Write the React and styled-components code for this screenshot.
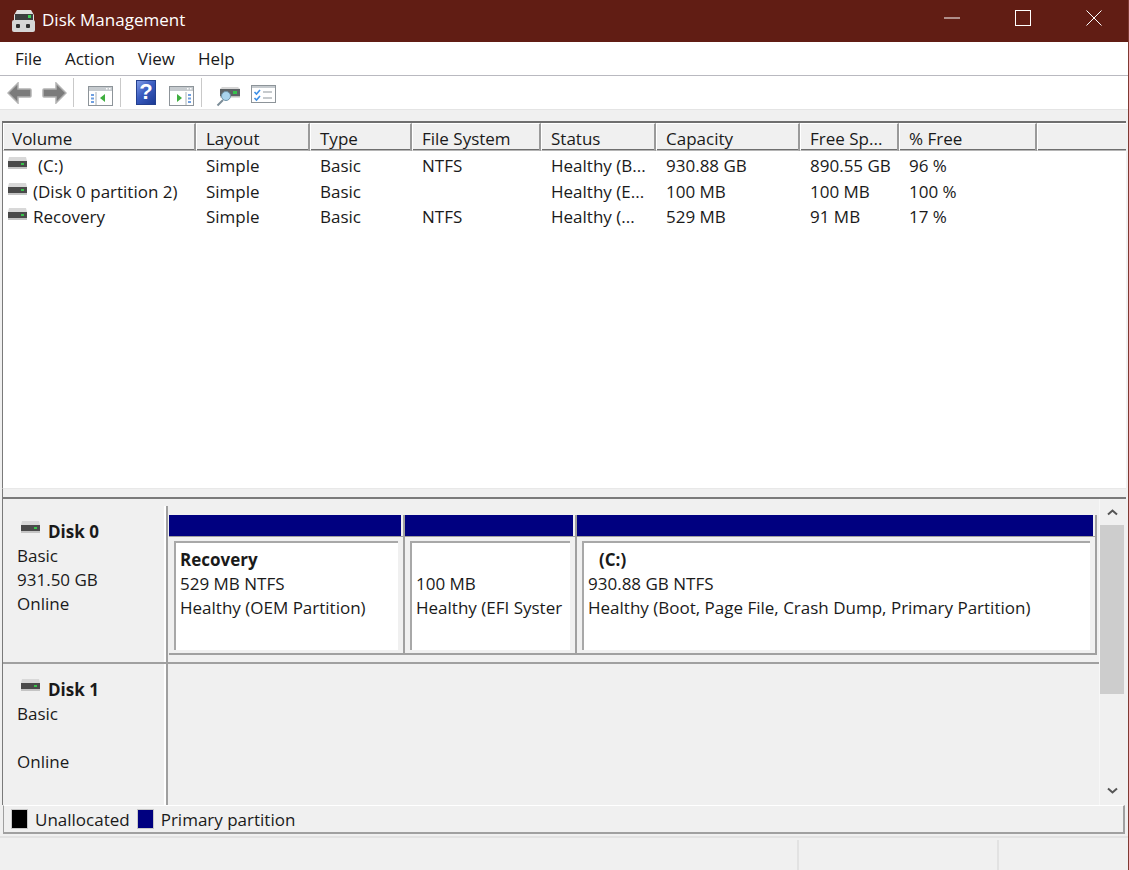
import React from "react";
import styled, { createGlobalStyle } from "styled-components";

const GlobalStyle = createGlobalStyle`
  html, body { margin: 0; padding: 0; background: #f0f0f0; }
  * { box-sizing: border-box; }
`;

const Window = styled.div`
  width: 1129px;
  height: 870px;
  display: flex;
  flex-direction: column;
  overflow: hidden;
  background: #f0f0f0;
  border-right: 1px solid #7f3a33;
  font-family: "Open Sans", "Liberation Sans", sans-serif;
  font-size: 17px;
  color: #1a1a1a;
`;

const TitleBar = styled.div`
  height: 42px;
  margin-right: -1px;
  flex: none;
  display: flex;
  align-items: center;
  background: #611d14;
  color: #fff;
  padding-left: 11px;
`;
const TitleText = styled.div`
  margin-left: 6px;
  line-height: 24px;
  margin-top: -3px;
`;
const WindowButtons = styled.div`
  margin-left: auto;
  align-self: flex-start;
  display: flex;
`;
const WindowButton = styled.div`
  width: 71px;
  height: 36px;
  display: flex;
  align-items: center;
  justify-content: center;
`;

const MenuBar = styled.div`
  height: 34px;
  flex: none;
  display: flex;
  align-items: center;
  gap: 23px;
  padding-left: 15px;
  background: #fff;
  border-bottom: 1px solid #b9b9c0;
`;
const MenuItem = styled.div`
  line-height: 22px;
`;

const ToolBar = styled.div`
  height: 34px;
  flex: none;
  display: flex;
  align-items: center;
  background: #fff;
  padding-left: 7px;
  border-bottom: 1px solid #e4e4e4;
`;
const ToolIcon = styled.div`
  flex: none;
  display: flex;
  margin-left: ${(p) => p.$gap || 0}px;
  margin-top: ${(p) => p.$drop || 0}px;
`;
const ToolSep = styled.div`
  flex: none;
  width: 1px;
  height: 29px;
  background: #c9c9c9;
  margin-left: ${(p) => p.$gap || 0}px;
`;
const HelpIcon = styled.div`
  flex: none;
  width: 20px;
  height: 25px;
  margin-left: 15px;
  margin-top: -1px;
  display: flex;
  align-items: center;
  justify-content: center;
  background: linear-gradient(135deg, #7f9be6 0%, #3a5cc0 45%, #1c3a95 100%);
  border: 1px solid #24408f;
  color: #fff;
  font-family: "Liberation Sans", sans-serif;
  font-weight: 700;
  font-size: 22px;
`;

const Strip = styled.div`
  height: 11px;
  flex: none;
`;

const ListPanel = styled.div`
  height: 367px;
  flex: none;
  margin: 0 2px;
  background: #fff;
  border-top: 2px solid #6f6f6f;
  border-left: 1px solid #7a7a7a;
  display: flex;
  flex-direction: column;
`;
const columns = "193px 114px 102px 129px 115px 144px 99px 138px 1fr";
const HeaderRow = styled.div`
  height: 28px;
  flex: none;
  display: grid;
  grid-template-columns: ${columns};
  background: #f0f0f0;
  border-bottom: 2px solid #6f6f6f;
`;
const HeaderCell = styled.div`
  padding: 4px 0 0 9px;
  line-height: 22px;
  white-space: nowrap;
  border-top: 1px solid #fff;
  border-left: 1px solid #fff;
  border-bottom: 1px solid #b5b5b5;
  border-right: 2px solid #9a9a9a;
  &:first-child { padding-left: 8px; }
  &:last-child { border-right: 0; }
`;
const ListRow = styled.div`
  display: grid;
  grid-template-columns: ${columns};
  height: 25.5px;
  line-height: 25px;
  white-space: nowrap;
  &:nth-child(2) { margin-top: 2px; }
`;
const ListCell = styled.div`
  padding-left: 10px;
`;
const NameCell = styled.div`
  display: flex;
  align-items: center;
  padding-left: 4px;
`;
const NameText = styled.span`
  margin-left: ${(p) => p.$gap}px;
`;
const RowGlyph = styled.span`
  display: flex;
  margin-top: -5px;
`;

const Splitter = styled.div`
  height: 11px;
  flex: none;
  margin: 0 2px;
  background: #f0f0f0;
  border-left: 1px solid #7a7a7a;
  border-top: 1px solid #e8e8e8;
  border-bottom: 2px solid #7a7a7a;
`;

const DiskPane = styled.div`
  height: 306px;
  flex: none;
  margin: 0 4px 0 2px;
  display: flex;
  border-left: 1px solid #7a7a7a;
`;
const DiskList = styled.div`
  flex: 1;
  min-width: 0;
  padding-top: 7px;
  display: flex;
  flex-direction: column;
`;
const DiskRow = styled.div`
  height: ${(p) => p.$height}px;
  flex: none;
  display: flex;
  border-bottom: ${(p) => (p.$line ? "2px solid #a0a0a0" : "0")};
`;
const DiskLabel = styled.div`
  width: 163px;
  flex: none;
  padding: 14px 0 0 14px;
  line-height: 24px;
  border-right: 2px solid #fff;
  box-shadow: 2px 0 0 #a0a0a0;
`;
const DiskTitle = styled.div`
  display: flex;
  align-items: center;
  gap: 7px;
  font-weight: 700;
  padding-left: 3px;
`;
const TitleDrive = styled.span`
  display: flex;
  margin-top: -10px;
`;
const Partitions = styled.div`
  flex: 1;
  min-width: 0;
  margin-left: 3px;
  padding-top: 9px;
  display: flex;
`;
const Partition = styled.div`
  width: ${(p) => p.$width}px;
  flex: none;
  height: 140px;
  display: flex;
  flex-direction: column;
  border-right: 2px solid #a0a0a0;
`;
const PartitionBar = styled.div`
  height: 21px;
  flex: none;
  margin-right: 2px;
  background: #000080;
`;
const PartitionBody = styled.div`
  height: 119px;
  flex: none;
  padding: 4px 5px 5px 5px;
  border-bottom: 2px solid #a0a0a0;
  border-top: 1px solid #a0a0a0;
`;
const PartitionInner = styled.div`
  height: 109px;
  background: #fff;
  border-top: 2px solid #a8a8a8;
  border-left: 2px solid #a8a8a8;
  padding: 5px 0 0 4px;
  line-height: 24px;
  white-space: nowrap;
  overflow: hidden;
`;
const PartitionName = styled.div`
  font-weight: 700;
  padding-left: ${(p) => p.$indent || 0}px;
  min-height: 24px;
`;

const ScrollBar = styled.div`
  width: 24px;
  flex: none;
  display: flex;
  flex-direction: column;
  align-items: center;
  background: #f0f0f0;
  box-shadow: -1px 0 0 #f7f7f7;
`;
const ScrollArrow = styled.div`
  height: 26px;
  flex: none;
  width: 100%;
  display: flex;
  align-items: center;
  justify-content: center;
  margin-top: ${(p) => p.$top || 0}px;
`;
const ScrollThumb = styled.div`
  width: 100%;
  height: 169px;
  flex: none;
  background: #cdcdcd;
`;

const Legend = styled.div`
  height: 29px;
  flex: none;
  margin: 0 3px 0 3px;
  display: flex;
  align-items: center;
  border-top: 1px solid #fff;
  border-bottom: 2px solid #a0a0a0;
  border-right: 2px solid #a0a0a0;
  border-left: 1px solid #a0a0a0;
  padding-left: 7px;
`;
const Swatch = styled.span`
  width: 17px;
  height: 20px;
  flex: none;
  background: ${(p) => p.$color};
  border: 1px solid #c8c8c8;
  margin-right: 7px;
`;
const LegendText = styled.span`
  margin-right: 7px;
  line-height: 24px;
  padding-top: 2px;
`;

const StatusBar = styled.div`
  margin-top: 2px;
  flex: 1;
  display: grid;
  grid-template-columns: 797px 200px 1fr;
  border-top: 2px solid #e2e2e2;
`;
const StatusCell = styled.div`
  border-left: ${(p) => (p.$line ? "2px solid #e2e2e2" : "0")};
  margin-top: 2px;
`;

const DriveGlyph = () => (
  <svg width="21" height="14" viewBox="0 0 21 14">
    <path d="M2 1h17l1 4H1z" fill="#d8d8d8" />
    <rect x="1" y="5" width="19" height="6" fill="#4a4a4a" />
    <rect x="1" y="11" width="19" height="2" fill="#c4c4c4" />
    <rect x="14" y="7" width="3" height="2" fill="#37c34a" />
  </svg>
);

const TitleGlyph = () => (
  <svg width="25" height="24" viewBox="0 0 25 24">
    <path d="M6 1h14l3 5v6H3V6z" fill="#e0e0e0" />
    <rect x="4" y="5" width="18" height="6" fill="#3c3f40" />
    <rect x="17" y="6" width="3" height="3" fill="#3ccf55" />
    <rect x="1" y="11" width="23" height="12" rx="2" fill="#d6d6d6" />
    <rect x="5" y="15" width="4" height="4" rx="1" fill="#2e2e2e" />
    <rect x="15" y="15" width="4" height="4" rx="1" fill="#2e2e2e" />
  </svg>
);

const ArrowGlyph = ({ flip }) => (
  <svg width="25" height="22" viewBox="0 0 25 22" style={flip ? { transform: "scaleX(-1)" } : undefined}>
    <path d="M11 1 1 11l10 10v-6h12a1 1 0 0 0 1-1V8a1 1 0 0 0-1-1H11z" fill="#7b7b7b" stroke="#b2b2b2" strokeWidth="1.5" />
  </svg>
);

const PaneGlyph = ({ right }) => (
  <svg width="25" height="20" viewBox="0 0 25 20">
    <rect x="0.5" y="0.5" width="24" height="19" fill="#fff" stroke="#8d9499" />
    <rect x="1" y="1" width="23" height="4" fill="#c6cbcf" />
    <rect x="18" y="2" width="1.5" height="1.5" fill="#fff" />
    <rect x="21" y="2" width="1.5" height="1.5" fill="#fff" />
    <path d={right ? "M17 6v13" : "M8 6v13"} stroke="#a8b0b5" />
    <g fill="#6f9fe0">
      <rect x={right ? 19 : 3} y="8" width="3" height="2" />
      <rect x={right ? 19 : 3} y="11.5" width="3" height="2" />
      <rect x={right ? 19 : 3} y="15" width="3" height="2" />
    </g>
    <path d={right ? "M8 8l5 4-5 4z" : "M17 8l-5 4 5 4z"} fill="#3fae3f" />
  </svg>
);

const ScopeGlyph = () => (
  <svg width="25" height="21" viewBox="0 0 25 21">
    <rect x="4" y="3" width="20" height="7" fill="#5d6265" />
    <path d="M4 3l2-2h16l2 2z" fill="#d6d6d6" />
    <rect x="4" y="10" width="20" height="1.5" fill="#bdbdbd" />
    <rect x="17" y="5" width="4" height="3" fill="#35c24b" />
    <circle cx="10" cy="10" r="4.5" fill="#a9d3ec" stroke="#6f93a8" />
    <path d="M7 14l-5.5 5.5" stroke="#7c8d98" strokeWidth="2" />
  </svg>
);

const ChecklistGlyph = () => (
  <svg width="25" height="18" viewBox="0 0 25 18">
    <rect x="0.5" y="0.5" width="24" height="17" fill="#fff" stroke="#8d9499" />
    <rect x="1" y="1" width="23" height="2" fill="#c6cbcf" />
    <path d="M3.5 7l2 2 3.5-4M3.5 13l2 2 3.5-4" fill="none" stroke="#3d8fe6" strokeWidth="1.6" />
    <path d="M12 7h9M12 13h9" stroke="#b4b9bd" strokeWidth="1.5" />
  </svg>
);

const Chevron = ({ down }) => (
  <svg width="11" height="7" viewBox="0 0 11 7">
    <path d={down ? "M1 1.5l4.5 4 4.5-4" : "M1 5.5l4.5-4 4.5 4"} fill="none" stroke="#555" strokeWidth="2" />
  </svg>
);

const headers = ["Volume", "Layout", "Type", "File System", "Status", "Capacity", "Free Sp...", "% Free", ""];
const volumes = [
  { name: "(C:)", gap: 10, cells: ["Simple", "Basic", "NTFS", "Healthy (B...", "930.88 GB", "890.55 GB", "96 %"] },
  { name: "(Disk 0 partition 2)", gap: 5, cells: ["Simple", "Basic", "", "Healthy (E...", "100 MB", "100 MB", "100 %"] },
  { name: "Recovery", gap: 5, cells: ["Simple", "Basic", "NTFS", "Healthy (...", "529 MB", "91 MB", "17 %"] },
];

export default function App() {
  return (
    <Window>
      <GlobalStyle />
      <TitleBar>
        <TitleGlyph />
        <TitleText>Disk Management</TitleText>
        <WindowButtons>
          <WindowButton>
            <svg width="16" height="16" viewBox="0 0 16 16"><path d="M0 8h16" stroke="#fff" strokeWidth="1" /></svg>
          </WindowButton>
          <WindowButton>
            <svg width="16" height="16" viewBox="0 0 16 16"><rect x="0.5" y="0.5" width="15" height="15" fill="none" stroke="#fff" /></svg>
          </WindowButton>
          <WindowButton>
            <svg width="16" height="16" viewBox="0 0 16 16"><path d="M0.5 0.5l15 15M15.5 0.5l-15 15" stroke="#fff" /></svg>
          </WindowButton>
        </WindowButtons>
      </TitleBar>

      <MenuBar>
        {["File", "Action", "View", "Help"].map((m) => (
          <MenuItem key={m}>{m}</MenuItem>
        ))}
      </MenuBar>

      <ToolBar>
        <ToolIcon><ArrowGlyph /></ToolIcon>
        <ToolIcon $gap={10}><ArrowGlyph flip /></ToolIcon>
        <ToolSep $gap={6} />
        <ToolIcon $gap={14} $drop={7}><PaneGlyph /></ToolIcon>
        <ToolSep $gap={7} />
        <HelpIcon>?</HelpIcon>
        <ToolIcon $gap={13} $drop={7}><PaneGlyph right /></ToolIcon>
        <ToolSep $gap={7} />
        <ToolIcon $gap={14} $drop={7}><ScopeGlyph /></ToolIcon>
        <ToolIcon $gap={10} $drop={2}><ChecklistGlyph /></ToolIcon>
      </ToolBar>

      <Strip />

      <ListPanel>
        <HeaderRow>
          {headers.map((h, i) => (
            <HeaderCell key={i}>{h}</HeaderCell>
          ))}
        </HeaderRow>
        {volumes.map((v) => (
          <ListRow key={v.name}>
            <NameCell>
              <RowGlyph><DriveGlyph /></RowGlyph>
              <NameText $gap={v.gap}>{v.name}</NameText>
            </NameCell>
            {v.cells.map((c, i) => (
              <ListCell key={i}>{c}</ListCell>
            ))}
          </ListRow>
        ))}
      </ListPanel>

      <Splitter />

      <DiskPane>
        <DiskList>
          <DiskRow $height={158} $line>
            <DiskLabel>
              <DiskTitle><TitleDrive><DriveGlyph /></TitleDrive>Disk 0</DiskTitle>
              <div>Basic</div>
              <div>931.50 GB</div>
              <div>Online</div>
            </DiskLabel>
            <Partitions>
              <Partition $width={236}>
                <PartitionBar />
                <PartitionBody>
                  <PartitionInner>
                    <PartitionName>Recovery</PartitionName>
                    <div>529 MB NTFS</div>
                    <div>Healthy (OEM Partition)</div>
                  </PartitionInner>
                </PartitionBody>
              </Partition>
              <Partition $width={172}>
                <PartitionBar />
                <PartitionBody>
                  <PartitionInner>
                    <PartitionName />
                    <div>100 MB</div>
                    <div>Healthy (EFI Syster</div>
                  </PartitionInner>
                </PartitionBody>
              </Partition>
              <Partition $width={520}>
                <PartitionBar />
                <PartitionBody>
                  <PartitionInner>
                    <PartitionName $indent={11}>(C:)</PartitionName>
                    <div>930.88 GB NTFS</div>
                    <div>Healthy (Boot, Page File, Crash Dump, Primary Partition)</div>
                  </PartitionInner>
                </PartitionBody>
              </Partition>
            </Partitions>
          </DiskRow>
          <DiskRow $height={141}>
            <DiskLabel>
              <DiskTitle><TitleDrive><DriveGlyph /></TitleDrive>Disk 1</DiskTitle>
              <div>Basic</div>
              <div>&nbsp;</div>
              <div>Online</div>
            </DiskLabel>
          </DiskRow>
        </DiskList>
        <ScrollBar>
          <ScrollArrow><Chevron /></ScrollArrow>
          <ScrollThumb />
          <ScrollArrow $top={83}><Chevron down /></ScrollArrow>
        </ScrollBar>
      </DiskPane>

      <Legend>
        <Swatch $color="#000" />
        <LegendText>Unallocated</LegendText>
        <Swatch $color="#000080" />
        <LegendText>Primary partition</LegendText>
      </Legend>

      <StatusBar>
        <StatusCell />
        <StatusCell $line />
        <StatusCell $line />
      </StatusBar>
    </Window>
  );
}
